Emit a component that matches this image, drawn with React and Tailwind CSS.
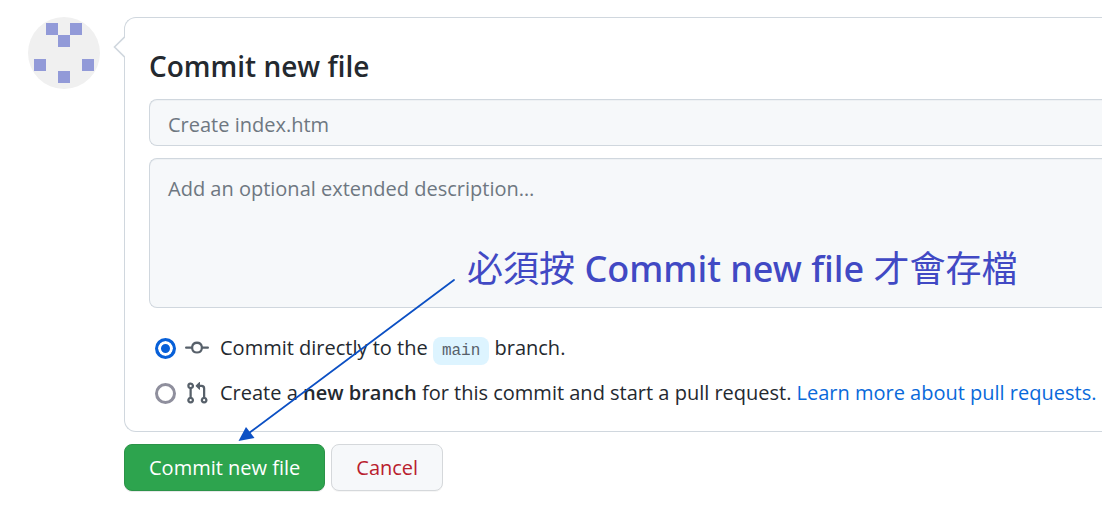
import React from "react";

function Identicon() {
  return (
    <svg viewBox="0 0 72 72" className="size-18 shrink-0 rounded-full" role="img" aria-label="User avatar">
      <rect width="72" height="72" fill="#f0f0f0" />
      <path
        fill="#929ad8"
        d="M18 6h12v12H18zM42 6h12v12H42zM30 18h12v12H30zM6 42h12v12H6zM54 42h12v12H54zM30 54h12v12H30z"
      />
    </svg>
  );
}

function CommitIcon() {
  return (
    <svg viewBox="0 0 16 16" className="size-6 shrink-0 fill-[#57606a]" aria-hidden="true">
      <path
        fillRule="evenodd"
        d="M10.5 7.75a2.5 2.5 0 11-5 0 2.5 2.5 0 015 0zm1.43.75a4.002 4.002 0 01-7.86 0H.75a.75.75 0 110-1.5h3.32a4.001 4.001 0 017.86 0h3.32a.75.75 0 110 1.5h-3.32z"
      />
    </svg>
  );
}

function PullRequestIcon() {
  return (
    <svg viewBox="0 0 16 16" className="size-6 shrink-0 fill-[#57606a]" aria-hidden="true">
      <path
        fillRule="evenodd"
        d="M7.177 3.073L9.573.677A.25.25 0 0110 .854v4.792a.25.25 0 01-.427.177L7.177 3.427a.25.25 0 010-.354zM3.75 2.5a.75.75 0 100 1.5.75.75 0 000-1.5zm-2.25.75a2.25 2.25 0 113 2.122v5.256a2.251 2.251 0 11-1.5 0V5.372A2.25 2.25 0 011.5 3.25zM11 2.5h-1V4h1a1 1 0 011 1v5.628a2.251 2.251 0 101.5 0V5A2.5 2.5 0 0011 2.5zm1 10.25a.75.75 0 111.5 0 .75.75 0 01-1.5 0zM3.75 12a.75.75 0 100 1.5.75.75 0 000-1.5z"
      />
    </svg>
  );
}

const radioClass =
  "size-[21px] shrink-0 appearance-none rounded-full border-3 border-[#8f8f9d] bg-white checked:border-[#0860d8] checked:bg-[#0860d8] checked:shadow-[inset_0_0_0_3px_white]";

const fieldClass =
  "block w-full rounded-l-lg border border-r-0 border-[#d0d7de] bg-[#f6f8fa] px-[18px] text-xl text-[#24292f] shadow-[inset_0_1px_0_rgba(208,215,222,0.2)] placeholder:text-[#6e7781]";

export default function App() {
  return (
    <main className="relative flex items-start gap-6 overflow-hidden bg-white pt-[17px] pb-6 pl-7 font-['Open_Sans','Noto_Sans_CJK_TC',sans-serif] text-xl text-[#24292f]">
      <Identicon />
      <form className="min-w-0 flex-1" onSubmit={(e) => e.preventDefault()}>
        <section className="relative rounded-l-xl border border-r-0 border-[#d0d7de] pt-[30px] pb-5 pl-6">
          <svg viewBox="0 0 12 24" className="absolute top-[17px] -left-[12px] h-6 w-3" aria-hidden="true">
            <path d="M12 1.5 1.5 12 12 22.5" fill="white" stroke="#d0d7de" strokeWidth="1.6" />
          </svg>

          <h1 className="text-[28px] leading-9 font-semibold">Commit new file</h1>

          <div className="mt-[15px] flex flex-col gap-3">
            <input type="text" aria-label="Commit summary" placeholder="Create index.htm" className={`${fieldClass} h-[47px] pt-1`} />
            <textarea
              aria-label="Extended description"
              placeholder="Add an optional extended description…"
              className={`${fieldClass} h-[150px] resize-none py-4 leading-7`}
            />
          </div>

          <div className="mt-[22px] flex flex-col gap-[9px] pl-1.5">
            <div className="flex h-9 items-center">
              <input id="direct" type="radio" name="target" defaultChecked className={radioClass} />
              <label htmlFor="direct" className="ml-[9px] flex items-center whitespace-nowrap">
                <CommitIcon />
                <span className="ml-[11px]">
                  Commit directly to the{" "}
                  <code className="rounded-lg bg-[#ddf4ff] px-[9px] py-[5px] font-['Liberation_Mono',monospace] text-base text-[#57606a]">
                    main
                  </code>{" "}
                  branch.
                </span>
              </label>
            </div>
            <div className="flex h-9 items-center">
              <input id="branch" type="radio" name="target" className={radioClass} />
              <label htmlFor="branch" className="ml-[9px] flex items-center whitespace-nowrap">
                <PullRequestIcon />
                <span className="ml-[11px]">
                  Create a <strong className="font-semibold">new branch</strong> for this commit and start a pull request.
                </span>
              </label>
              <a href="#pull-requests" className="ml-[5px] whitespace-nowrap text-[#0969da]">
                Learn more about pull requests.
              </a>
            </div>
          </div>
        </section>

        <div className="mt-3 flex gap-1.5">
          <button
            type="submit"
            className="h-[47px] rounded-lg border border-[#2b9348] bg-[#2da44e] px-6 text-white shadow-[0_1px_0_rgba(27,31,36,0.1)]"
          >
            Commit new file
          </button>
          <button
            type="button"
            className="h-[47px] rounded-lg border border-[#d5d8db] bg-[#f6f8fa] px-6 text-[#b9202d] shadow-[0_1px_0_rgba(27,31,36,0.04)]"
          >
            Cancel
          </button>
        </div>
      </form>

      <svg viewBox="0 0 220 164" className="pointer-events-none absolute top-[278px] left-[237px] h-[164px] w-[220px]" aria-hidden="true">
        <path d="M217 2 12 155" stroke="#0c50c4" strokeWidth="1.8" strokeLinecap="round" />
        <path d="M1.5 163 9 149 17.5 160z" fill="#0c50c4" />
      </svg>
      <p className="pointer-events-none absolute top-[244px] left-[467px] font-['Noto_Sans','Noto_Sans_CJK_TC',sans-serif] text-4xl leading-[50px] whitespace-nowrap text-[#4149c4]">
        必須按 <span className="font-medium">Commit new file</span> 才會存檔
      </p>
    </main>
  );
}
